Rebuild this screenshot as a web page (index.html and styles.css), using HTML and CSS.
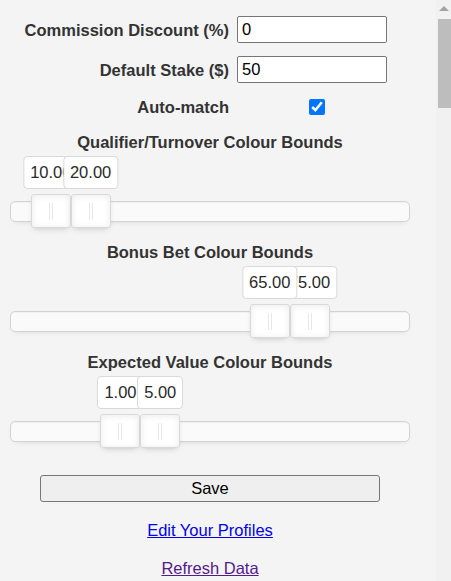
FILE: index.html
```html
<!DOCTYPE html>
<html lang="en">
<head>
<meta charset="utf-8">
<title>Settings</title>
<link rel="stylesheet" href="styles.css">
</head>
<body>
<div class="panel">
  <div class="field">
    <label class="label" for="commission">Commission Discount (%)</label>
    <input class="text-input" id="commission" type="text" value="0">
  </div>
  <div class="field">
    <label class="label" for="stake">Default Stake ($)</label>
    <input class="text-input" id="stake" type="text" value="50">
  </div>
  <div class="field field-check">
    <label class="label" for="automatch">Auto-match</label>
    <input class="check" id="automatch" type="checkbox" checked>
  </div>

  <div class="section">
    <h3 class="section-title">Qualifier/Turnover Colour Bounds</h3>
    <div class="slider">
      <div class="handle" style="left:10%"><div class="tooltip">10.00</div></div>
      <div class="handle" style="left:20%"><div class="tooltip">20.00</div></div>
    </div>
  </div>

  <div class="section">
    <h3 class="section-title">Bonus Bet Colour Bounds</h3>
    <div class="slider">
      <div class="handle handle-top" style="left:65%"><div class="tooltip">65.00</div></div>
      <div class="handle" style="left:75%"><div class="tooltip">75.00</div></div>
    </div>
  </div>

  <div class="section">
    <h3 class="section-title">Expected Value Colour Bounds</h3>
    <div class="slider">
      <div class="handle" style="left:27.5%"><div class="tooltip">1.00</div></div>
      <div class="handle" style="left:37.5%"><div class="tooltip">5.00</div></div>
    </div>
  </div>

  <div class="actions">
    <button class="save-btn" type="button">Save</button>
    <a class="link" href="#profiles">Edit Your Profiles</a>
    <a class="link link-visited" href="#refresh">Refresh Data</a>
  </div>
</div>

<div class="scrollbar" aria-hidden="true">
  <div class="scroll-arrow"></div>
  <div class="scroll-thumb"></div>
</div>
</body>
</html>
```

FILE: styles.css
```css
html, body {
  margin: 0;
  padding: 0;
}

body {
  background: #f4f4f4;
  font-family: "Liberation Sans", Arial, sans-serif;
  font-size: 16.5px;
  color: #333;
}

.panel {
  width: 400px;
  margin-left: 10px;
  padding-top: 16px;
  display: flex;
  flex-direction: column;
}

.field {
  display: flex;
  align-items: center;
  gap: 8px;
  height: 27px;
  margin-bottom: 13px;
}

.field-check {
  height: 20px;
  margin-top: 1px;
  margin-bottom: 0;
}

.label {
  width: 219px;
  text-align: right;
  font-weight: bold;
  line-height: 20px;
}

.text-input {
  box-sizing: border-box;
  width: 150px;
  height: 27px;
  margin: 0;
  padding: 0 4px;
  border: 1px solid #767676;
  border-radius: 2px;
  background: #fff;
  font-family: "Liberation Sans", Arial, sans-serif;
  font-size: 16.5px;
  color: #000;
}

.check {
  width: 16px;
  height: 16px;
  margin: 0 0 0 72px;
  accent-color: #0075ff;
}

.section {
  display: flex;
  flex-direction: column;
  margin-top: 15px;
}

.section + .section {
  margin-top: 20px;
}

.section-title {
  margin: 0;
  font-size: 16.5px;
  line-height: 20px;
  font-weight: bold;
  text-align: center;
  color: #333;
}

.slider {
  position: relative;
  box-sizing: border-box;
  height: 21px;
  margin-top: 49px;
  border: 1px solid #d3d3d3;
  border-radius: 5px;
  background: #fafafa;
  box-shadow: inset 0 1px 1px #f0f0f0, 0 3px 6px -5px #bbb;
}

.handle {
  position: absolute;
  top: -8px;
  width: 40px;
  height: 34px;
  margin-left: -20px;
  box-sizing: border-box;
  border: 1px solid #d9d9d9;
  border-radius: 3px;
  background: #fff;
  box-shadow: inset 0 0 1px #fff, inset 0 1px 7px #ebebeb, 0 3px 6px -3px #bbb;
  z-index: 1;
}

.handle::before,
.handle::after {
  content: "";
  position: absolute;
  top: 8px;
  width: 1px;
  height: 17px;
  background: #e8e8e8;
}

.handle::before {
  left: 17px;
}

.handle::after {
  left: 20px;
}

.handle-top {
  z-index: 2;
}

.tooltip {
  position: absolute;
  bottom: 120%;
  left: 50%;
  transform: translateX(-50%);
  padding: 6px;
  border: 1px solid #d9d9d9;
  border-radius: 4px;
  background: #fff;
  color: #2a2a2a;
  font-size: 16.5px;
  line-height: 19px;
  white-space: nowrap;
  text-align: center;
}

.actions {
  display: flex;
  flex-direction: column;
  align-items: center;
  margin-top: 33px;
}

.save-btn {
  box-sizing: border-box;
  width: 340px;
  height: 27px;
  margin: 0;
  padding: 0;
  border: 1px solid #767676;
  border-radius: 3px;
  background: #efefef;
  font-family: "Liberation Sans", Arial, sans-serif;
  font-size: 16.5px;
  line-height: 25px;
  color: #000;
}

.link {
  margin-top: 18px;
  line-height: 20px;
  color: #0000ee;
  text-decoration: underline;
}

.link-visited {
  margin-top: 18px;
  color: #551a8b;
}

.scrollbar {
  position: fixed;
  top: 0;
  right: 0;
  width: 15px;
  height: 100%;
  background: #f1f1f1;
  display: flex;
  flex-direction: column;
  align-items: flex-end;
}

.scroll-arrow {
  align-self: center;
  width: 0;
  height: 0;
  margin-top: 6px;
  border-left: 5px solid transparent;
  border-right: 5px solid transparent;
  border-bottom: 5px solid #a3a3a3;
}

.scroll-thumb {
  width: 13px;
  height: 89px;
  margin-top: 8px;
  background: #bdbdbd;
}
```
